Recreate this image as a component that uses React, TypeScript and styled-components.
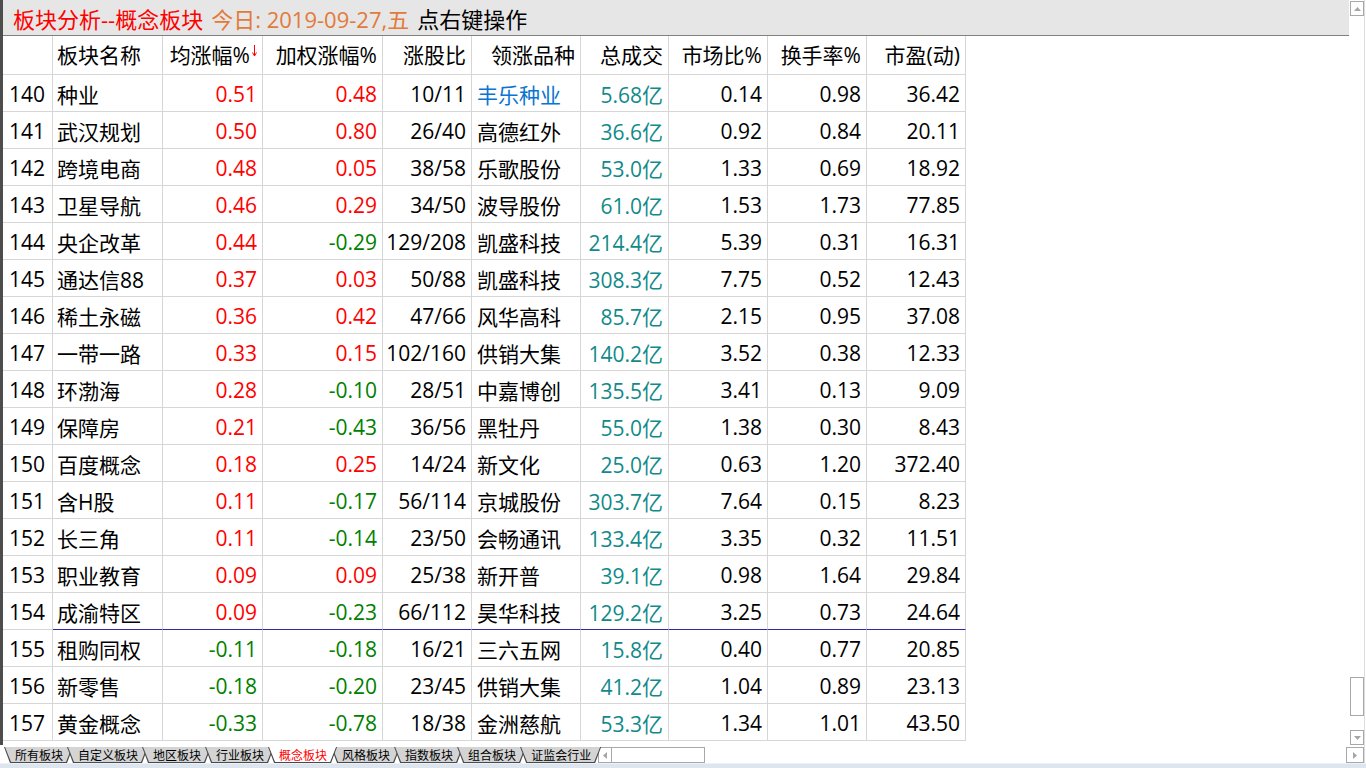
import styled, { createGlobalStyle } from "styled-components";

const GlobalStyle = createGlobalStyle`
    html,
    body {
        margin: 0;
        padding: 0;
        background: #ffffff;
        overflow: hidden;
    }

    body {
        font-family: "Open Sans", "Noto Sans CJK SC", sans-serif;
    }
`;

const GRID = "50px 110px 100px 120px 89px 109px 88px 99px 99px 99px";
const LINE = "#d6d6d6";

const Screen = styled.div`
    width: 1366px;
    height: 768px;
    display: flex;
    flex-direction: column;
    background: #ffffff;
`;

const Frame = styled.div`
    width: 1364px;
    height: 763px;
    border-right: 1px solid #dcdcdc;
    display: flex;
    flex-direction: column;
`;

const Top = styled.div`
    height: 745px;
    display: flex;
`;

const LeftEdge = styled.div`
    width: 3px;
    flex-shrink: 0;
    background: #4d4d4d;
`;

const Main = styled.div`
    width: 1346px;
    flex-shrink: 0;
    display: flex;
    flex-direction: column;
`;

const TitleBar = styled.div`
    height: 35px;
    border-bottom: 1px solid #808080;
    background: #e6e6e6;
    display: flex;
    align-items: center;
    padding-left: 10px;
    gap: 8px;
    font-size: 22px;
    white-space: nowrap;
`;

const TitleText = styled.span<{ $tone: string }>`
    color: ${(p) => p.$tone};
`;

const Sheet = styled.div`
    display: flex;
    flex-direction: column;
`;

const Row = styled.div<{ $head?: boolean }>`
    display: grid;
    grid-template-columns: ${GRID};
    height: ${(p) => (p.$head ? 39 : 37)}px;
    font-size: 21px;

    & > div {
        padding-top: ${(p) => (p.$head ? 0 : 1)}px;
        padding-bottom: ${(p) => (p.$head ? 3 : 0)}px;
    }
`;

const Cell = styled.div<{
    $left?: boolean;
    $pad?: number;
    $color?: string;
    $divider?: boolean;
}>`
    box-sizing: border-box;
    border-right: 1px solid ${LINE};
    border-bottom: 1px solid ${(p) => (p.$divider ? "#2c2ca8" : LINE)};
    display: flex;
    align-items: center;
    justify-content: ${(p) => (p.$left ? "flex-start" : "flex-end")};
    padding-left: ${(p) => (p.$left ? p.$pad ?? 4 : 0)}px;
    padding-right: ${(p) => (p.$left ? 0 : 5)}px;
    white-space: nowrap;
    color: ${(p) => p.$color ?? "#000000"};
`;

const SortArrow = styled.svg`
    width: 5px;
    height: 12px;
    margin-left: 2px;
    margin-bottom: 5px;
    flex-shrink: 0;
`;

const VScroll = styled.div`
    width: 14px;
    padding-left: 1px;
    display: flex;
    flex-direction: column;
`;

const ScrollButton = styled.div<{ $w?: number; $h?: number }>`
    box-sizing: border-box;
    width: ${(p) => p.$w ?? 14}px;
    height: ${(p) => p.$h ?? 15}px;
    border: 1px solid #a8a8a8;
    background: #ffffff;
    display: flex;
    align-items: center;
    justify-content: center;
    flex-shrink: 0;
`;

const UpButton = styled(ScrollButton)`
    margin-top: 1px;
`;

const Track = styled.div`
    flex: 1;
    display: flex;
    flex-direction: column;
    justify-content: flex-end;
    padding-bottom: 14px;
`;

const Thumb = styled.div`
    box-sizing: border-box;
    width: 14px;
    height: 39px;
    border: 1px solid #a8a8a8;
`;

const Bottom = styled.div`
    height: 18px;
    display: flex;
    align-items: flex-end;
    padding-left: 4px;
`;

const Tabs = styled.div`
    display: flex;
    height: 16px;
`;

const Tab = styled.div<{ $active?: boolean; $first?: boolean }>`
    height: 16px;
    box-sizing: border-box;
    padding-bottom: 1px;
    margin-left: ${(p) => (p.$first ? 0 : -6)}px;
    background: #4a4a4a;
    clip-path: polygon(0 0, 100% 0, calc(100% - 6px) 100%, 6px 100%);
    position: ${(p) => (p.$active ? "relative" : "static")};
    z-index: ${(p) => (p.$active ? 2 : "auto")};
`;

const TabFace = styled.div<{ $active?: boolean }>`
    height: 15px;
    padding: 0 10px 0 11px;
    background: ${(p) => (p.$active ? "#ffffff" : "#d4d4d4")};
    clip-path: polygon(
        1px 0,
        calc(100% - 1px) 0,
        calc(100% - 7px) 100%,
        7px 100%
    );
    font-family: "Noto Sans CJK SC", sans-serif;
    font-size: 12px;
    line-height: 15px;
    white-space: nowrap;
    color: ${(p) => (p.$active ? "#ff0000" : "#000000")};
`;

const HScroll = styled.div`
    box-sizing: border-box;
    width: 107px;
    height: 16px;
    margin-left: -3px;
    border: 1px solid #a8a8a8;
    display: flex;
`;

const HScrollLeft = styled.div`
    width: 12px;
    border-right: 1px solid #a8a8a8;
    display: flex;
    align-items: center;
    justify-content: center;
`;

const Spacer = styled.div`
    flex: 1;
`;

const Strip = styled.div`
    height: 5px;
    background: #dde5ef;
    border-top: 1px solid #eef2f7;
    box-sizing: border-box;
`;

type Item = {
    no: number;
    name: string;
    avg: string;
    wavg: string;
    ratio: string;
    lead: string;
    vol: string;
    mkt: string;
    turn: string;
    pe: string;
};

const rows: Item[] = [
    { no: 140, name: "种业", avg: "0.51", wavg: "0.48", ratio: "10/11", lead: "丰乐种业", vol: "5.68亿", mkt: "0.14", turn: "0.98", pe: "36.42" },
    { no: 141, name: "武汉规划", avg: "0.50", wavg: "0.80", ratio: "26/40", lead: "高德红外", vol: "36.6亿", mkt: "0.92", turn: "0.84", pe: "20.11" },
    { no: 142, name: "跨境电商", avg: "0.48", wavg: "0.05", ratio: "38/58", lead: "乐歌股份", vol: "53.0亿", mkt: "1.33", turn: "0.69", pe: "18.92" },
    { no: 143, name: "卫星导航", avg: "0.46", wavg: "0.29", ratio: "34/50", lead: "波导股份", vol: "61.0亿", mkt: "1.53", turn: "1.73", pe: "77.85" },
    { no: 144, name: "央企改革", avg: "0.44", wavg: "-0.29", ratio: "129/208", lead: "凯盛科技", vol: "214.4亿", mkt: "5.39", turn: "0.31", pe: "16.31" },
    { no: 145, name: "通达信88", avg: "0.37", wavg: "0.03", ratio: "50/88", lead: "凯盛科技", vol: "308.3亿", mkt: "7.75", turn: "0.52", pe: "12.43" },
    { no: 146, name: "稀土永磁", avg: "0.36", wavg: "0.42", ratio: "47/66", lead: "风华高科", vol: "85.7亿", mkt: "2.15", turn: "0.95", pe: "37.08" },
    { no: 147, name: "一带一路", avg: "0.33", wavg: "0.15", ratio: "102/160", lead: "供销大集", vol: "140.2亿", mkt: "3.52", turn: "0.38", pe: "12.33" },
    { no: 148, name: "环渤海", avg: "0.28", wavg: "-0.10", ratio: "28/51", lead: "中嘉博创", vol: "135.5亿", mkt: "3.41", turn: "0.13", pe: "9.09" },
    { no: 149, name: "保障房", avg: "0.21", wavg: "-0.43", ratio: "36/56", lead: "黑牡丹", vol: "55.0亿", mkt: "1.38", turn: "0.30", pe: "8.43" },
    { no: 150, name: "百度概念", avg: "0.18", wavg: "0.25", ratio: "14/24", lead: "新文化", vol: "25.0亿", mkt: "0.63", turn: "1.20", pe: "372.40" },
    { no: 151, name: "含H股", avg: "0.11", wavg: "-0.17", ratio: "56/114", lead: "京城股份", vol: "303.7亿", mkt: "7.64", turn: "0.15", pe: "8.23" },
    { no: 152, name: "长三角", avg: "0.11", wavg: "-0.14", ratio: "23/50", lead: "会畅通讯", vol: "133.4亿", mkt: "3.35", turn: "0.32", pe: "11.51" },
    { no: 153, name: "职业教育", avg: "0.09", wavg: "0.09", ratio: "25/38", lead: "新开普", vol: "39.1亿", mkt: "0.98", turn: "1.64", pe: "29.84" },
    { no: 154, name: "成渝特区", avg: "0.09", wavg: "-0.23", ratio: "66/112", lead: "昊华科技", vol: "129.2亿", mkt: "3.25", turn: "0.73", pe: "24.64" },
    { no: 155, name: "租购同权", avg: "-0.11", wavg: "-0.18", ratio: "16/21", lead: "三六五网", vol: "15.8亿", mkt: "0.40", turn: "0.77", pe: "20.85" },
    { no: 156, name: "新零售", avg: "-0.18", wavg: "-0.20", ratio: "23/45", lead: "供销大集", vol: "41.2亿", mkt: "1.04", turn: "0.89", pe: "23.13" },
    { no: 157, name: "黄金概念", avg: "-0.33", wavg: "-0.78", ratio: "18/38", lead: "金洲慈航", vol: "53.3亿", mkt: "1.34", turn: "1.01", pe: "43.50" },
];

const tabs = [
    "所有板块",
    "自定义板块",
    "地区板块",
    "行业板块",
    "概念板块",
    "风格板块",
    "指数板块",
    "组合板块",
    "证监会行业",
];

const tone = (v: string) => (v.startsWith("-") ? "#008000" : "#ff0000");

const Triangle = ({ dir }: { dir: "up" | "down" | "left" | "right" }) => {
    const pts = {
        up: "0,4 7,4 3.5,0",
        down: "0,0 7,0 3.5,4",
        left: "4,0 4,7 0,3.5",
        right: "0,0 0,7 4,3.5",
    }[dir];
    const vertical = dir === "up" || dir === "down";
    return (
        <svg
            width={vertical ? 7 : 4}
            height={vertical ? 4 : 7}
            viewBox={vertical ? "0 0 7 4" : "0 0 4 7"}
        >
            <polygon points={pts} fill="#a6a6a6" />
        </svg>
    );
};

const App = () => {
    return (
        <Screen>
            <GlobalStyle />
            <Frame>
                <Top>
                    <LeftEdge />
                    <Main>
                        <TitleBar>
                            <TitleText $tone="#ff0000">板块分析--概念板块</TitleText>
                            <TitleText $tone="#e3793a">今日: 2019-09-27,五</TitleText>
                            <TitleText $tone="#000000">点右键操作</TitleText>
                        </TitleBar>
                        <Sheet>
                            <Row $head>
                                <Cell />
                                <Cell $left>板块名称</Cell>
                                <Cell>
                                    均涨幅%
                                    <SortArrow viewBox="0 0 5 12">
                                        <line x1="2.5" y1="0" x2="2.5" y2="11" stroke="#ff0000" strokeWidth="1" />
                                        <polyline points="0.5,7.5 2.5,11 4.5,7.5" fill="none" stroke="#ff0000" strokeWidth="1" />
                                    </SortArrow>
                                </Cell>
                                <Cell>加权涨幅%</Cell>
                                <Cell>涨股比</Cell>
                                <Cell>领涨品种</Cell>
                                <Cell>总成交</Cell>
                                <Cell>市场比%</Cell>
                                <Cell>换手率%</Cell>
                                <Cell>市盈(动)</Cell>
                            </Row>
                            {rows.map((r) => {
                                const div = r.no === 154;
                                return (
                                    <Row key={r.no}>
                                        <Cell $left $pad={6}>{r.no}</Cell>
                                        <Cell $left $divider={div}>{r.name}</Cell>
                                        <Cell $divider={div} $color={tone(r.avg)}>{r.avg}</Cell>
                                        <Cell $divider={div} $color={tone(r.wavg)}>{r.wavg}</Cell>
                                        <Cell $divider={div}>{r.ratio}</Cell>
                                        <Cell
                                            $left
                                            $pad={5}
                                            $divider={div}
                                            $color={r.no === 140 ? "#0a74d2" : undefined}
                                        >
                                            {r.lead}
                                        </Cell>
                                        <Cell $divider={div} $color="#118a8a">{r.vol}</Cell>
                                        <Cell $divider={div}>{r.mkt}</Cell>
                                        <Cell $divider={div}>{r.turn}</Cell>
                                        <Cell $divider={div}>{r.pe}</Cell>
                                    </Row>
                                );
                            })}
                        </Sheet>
                    </Main>
                    <VScroll>
                        <UpButton>
                            <Triangle dir="up" />
                        </UpButton>
                        <Track>
                            <Thumb />
                        </Track>
                        <ScrollButton>
                            <Triangle dir="down" />
                        </ScrollButton>
                    </VScroll>
                </Top>
                <Bottom>
                    <Tabs>
                        {tabs.map((t, i) => (
                            <Tab key={t} $first={i === 0} $active={t === "概念板块"}>
                                <TabFace $active={t === "概念板块"}>{t}</TabFace>
                            </Tab>
                        ))}
                    </Tabs>
                    <HScroll>
                        <HScrollLeft>
                            <Triangle dir="left" />
                        </HScrollLeft>
                    </HScroll>
                    <Spacer />
                    <ScrollButton $w={18} $h={16}>
                        <Triangle dir="right" />
                    </ScrollButton>
                </Bottom>
            </Frame>
            <Strip />
        </Screen>
    );
};

export default App;
